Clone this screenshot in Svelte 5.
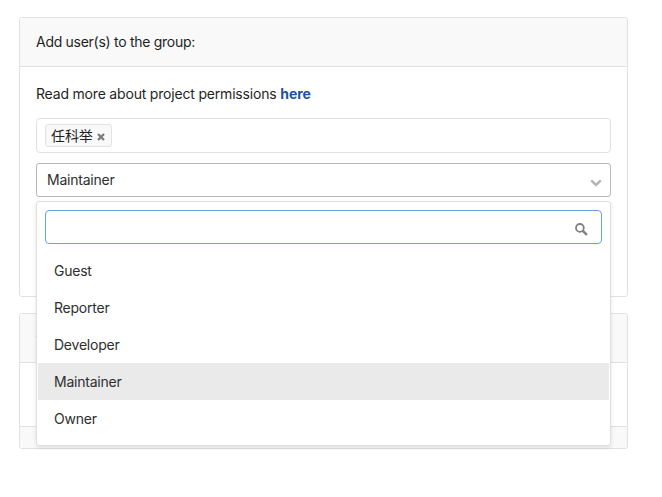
<script>
  const roles = ['Guest', 'Reporter', 'Developer', 'Maintainer', 'Owner'];
  let selected = $state('Maintainer');
  let query = $state('');
</script>

<main>
  <section class="card members">
    <header><span class="title">Add user(s) to the group:</span></header>
    <div class="body">
      <p><span class="read">Read more about project permissions</span> <a href="#permissions">here</a></p>
      <div class="users">
        <span class="tag">
          <span class="name">任科举</span>
          <svg width="8" height="8" viewBox="0 0 8 8"><path d="M1 1l6 6M7 1L1 7" stroke="#7b7b7b" stroke-width="2.3" /></svg>
        </span>
      </div>
      <div class="role">
        <button class="select">
          <span>{selected}</span>
          <svg width="12" height="8" viewBox="0 0 12 8"><path d="M1.2 1.3L6 6L10.8 1.3" fill="none" stroke="#b5b5b5" stroke-width="2.5" /></svg>
        </button>
        <div class="menu">
          <div class="search">
            <input bind:value={query} aria-label="Search roles" />
            <svg width="13" height="13" viewBox="0 0 13 13" fill="none" stroke="#808080">
              <circle cx="4.9" cy="4.9" r="3.9" stroke-width="1.8" />
              <path d="M7.8 7.8L11.9 11.9" stroke-width="2.4" />
            </svg>
          </div>
          <ul>
            {#each roles as role}
              <li class:active={role === selected}><button onclick={() => (selected = role)}>{role}</button></li>
            {/each}
          </ul>
        </div>
      </div>
    </div>
  </section>
  <section class="card group">
    <header><i></i></header>
    <div class="row"></div>
    <footer></footer>
  </section>
</main>

<style>
  :global(body) { background: #fff; }
  main {
    box-sizing: border-box;
    height: 497px;
    padding: 17px 34px 0 19px;
    overflow: hidden;
    font: 14px/20px Inter, "Noto Sans CJK SC", sans-serif;
    letter-spacing: -0.23px;
    color: #2e2e2e;
  }
  main * { box-sizing: border-box; }
  .card { border: 1px solid #e1e1e1; border-radius: 3px; background: #fff; }
  .members { height: 280px; }
  .group { height: 136px; margin-top: 16px; overflow: hidden; }
  header {
    height: 49px;
    padding: 14px 16px;
    border-bottom: 1px solid #e1e1e1;
    border-radius: 2px 2px 0 0;
    background: #f9f9f9;
    color: #1f1f1f;
  }
  header i { display: block; width: 1px; height: 1px; margin: 8px 0 0 -1px; background: #f3dcc0; }
  .title { letter-spacing: -0.28px; }
  .body { padding: 17px 16px 0; }
  p { margin: 0 0 14px; color: #1f1f1f; letter-spacing: -0.19px; }
  a { color: #1b51a3; font-weight: 700; letter-spacing: 0; text-decoration: none; }
  .users {
    height: 35px;
    padding: 5px 8px;
    border: 1px solid #e1e1e1;
    border-radius: 4px;
  }
  .tag {
    display: flex;
    align-items: center;
    width: 67px;
    height: 23px;
    padding-left: 5px;
    gap: 4px;
    border: 1px solid #e3e3e3;
    border-radius: 3px;
    background: #f9f9f9;
    color: #1f1f1f;
    letter-spacing: -0.1px;
  }
  .name { width: 42px; white-space: nowrap; }
  .tag svg { margin-top: 2px; }
  .role { position: relative; margin-top: 10px; }
  button { font: inherit; letter-spacing: inherit; color: inherit; text-align: left; background: none; }
  .select {
    display: flex;
    align-items: center;
    justify-content: space-between;
    width: 100%;
    height: 34px;
    padding: 0 8.5px 0 10px;
    border: 1px solid #b8b8b8;
    border-radius: 3px;
  }
  .select svg { margin-top: 5px; }
  .menu {
    position: absolute;
    top: 38px;
    left: 0;
    right: 0;
    z-index: 1;
    height: 245px;
    padding: 8px 1px 0;
    border: 1px solid #dfdfdf;
    border-radius: 3px;
    background: #fff;
    box-shadow: 0 2px 4px rgba(0, 0, 0, 0.1);
  }
  .search {
    display: flex;
    align-items: center;
    height: 34px;
    margin: 0 7px;
    padding: 0 13px 0 8px;
    border: 1px solid #65a3e5;
    border-radius: 4px;
  }
  input { flex: 1; padding: 0; border: 0; outline: 0; font: inherit; }
  .search svg { margin-top: 4px; }
  ul { margin: 8px 0 0; padding: 0; list-style: none; }
  li { height: 37px; }
  li button { width: 100%; height: 37px; padding: 0 16px; border: 0; }
  .active { background: #eaeaea; }
  .row { height: 63px; }
  footer { height: 22px; border-top: 1px solid #e1e1e1; background: #f9f9f9; }
</style>
